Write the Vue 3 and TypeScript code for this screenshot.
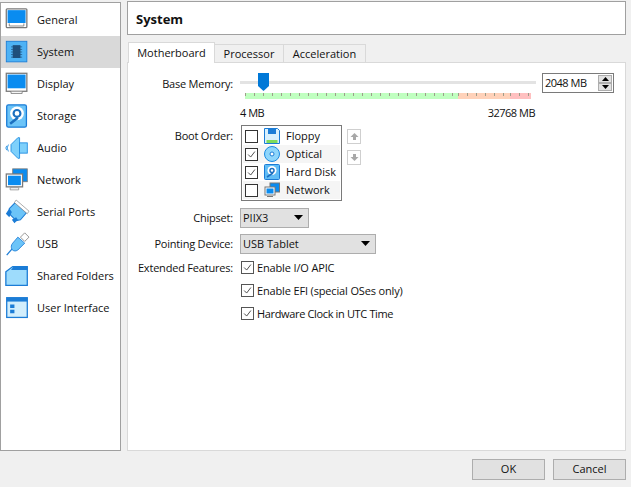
<script setup lang="ts">
interface NavItem { id: string; label: string }
const nav: NavItem[] = [
  { id: 'general', label: 'General' },
  { id: 'system', label: 'System' },
  { id: 'display', label: 'Display' },
  { id: 'storage', label: 'Storage' },
  { id: 'audio', label: 'Audio' },
  { id: 'network', label: 'Network' },
  { id: 'serial', label: 'Serial Ports' },
  { id: 'usb', label: 'USB' },
  { id: 'folders', label: 'Shared Folders' },
  { id: 'ui', label: 'User Interface' },
]
const boot = [
  { id: 'floppy', label: 'Floppy', on: false },
  { id: 'optical', label: 'Optical', on: true },
  { id: 'disk', label: 'Hard Disk', on: true },
  { id: 'net', label: 'Network', on: false },
]
const features = ['Enable I/O APIC', 'Enable EFI (special OSes only)', 'Hardware Clock in UTC Time']
</script>

<template>
  <div class="win">
    <div class="main">
      <aside class="side">
        <div v-for="n in nav" :key="n.id" class="nav" :class="{ active: n.id === 'system' }">
          <svg class="nicon" viewBox="0 0 28 28">
            <template v-if="n.id === 'general'">
              <rect x="1.500" y="1" width="24" height="22" rx="1" fill="#fff" stroke="#7a7a7a" stroke-width="1.500"/>
              <rect x="3" y="2.500" width="21" height="15" fill="#0a8cf0"/>
              <path d="M5 18v3h17v-3" fill="#fff" stroke="#7a7a7a"/>
            </template>
            <template v-else-if="n.id === 'system'">
              <rect x="1.500" y="1.500" width="24" height="24" fill="#4db2f5" stroke="#1b7cd6"/>
              <rect x="9" y="6" width="9" height="15" fill="#1f4f7d"/>
              <path d="M7 8h13M7 11h13M7 14h13M7 17h13M7 20h13" stroke="#1f4f7d" stroke-width=".8"/>
            </template>
            <template v-else-if="n.id === 'display'">
              <rect x="1.500" y="1.500" width="24" height="21" fill="#fff" stroke="#7a7a7a" stroke-width="1.500"/>
              <rect x="3" y="3" width="21" height="16" fill="#0a8cf0"/>
              <path d="M7 23v2h13v-2" fill="#fff" stroke="#7a7a7a"/>
            </template>
            <template v-else-if="n.id === 'storage'">
              <rect x="2" y="1" width="23" height="26" rx="2" fill="#6cc4f8" stroke="#1b7cd6" stroke-width="1.500"/>
              <circle cx="14" cy="11" r="8" fill="#fff"/>
              <circle cx="14" cy="11" r="4" fill="none" stroke="#1b6fc0" stroke-width="2.500"/>
              <path d="M6 23l9-7" stroke="#1b6fc0" stroke-width="3"/>
            </template>
            <template v-else-if="n.id === 'audio'">
              <path d="M7 10L15 2h2v24h-2l-8-8z" fill="#7ed0fb" stroke="#1b8ae0"/>
              <rect x="17" y="8" width="9" height="12" fill="#7ed0fb" stroke="#1b8ae0"/>
              <path d="M4 10q-3 4 0 8M2 11.500q-2 2.500 0 5" fill="none" stroke="#1b8ae0"/>
            </template>
            <template v-else-if="n.id === 'network'">
              <rect x="9" y="1" width="17" height="15" fill="#0a8cf0" stroke="#7a7a7a"/>
              <rect x="1.500" y="7" width="19" height="15" fill="#fff" stroke="#7a7a7a" stroke-width="1.500"/>
              <rect x="3.500" y="9" width="15" height="11" fill="#0a8cf0"/>
              <path d="M6 23h10v2.500H6z" fill="#fff" stroke="#7a7a7a" stroke-width=".8"/>
            </template>
            <template v-else-if="n.id === 'serial'">
              <path d="M5 10L12 3l13 12-7 8-5 1-8-8z" fill="#6cc4f8" stroke="#1b7cd6" stroke-width="1.200"/>
              <path d="M13 0l15 13-2 3L11 3z" fill="#fff" stroke="#888" stroke-width=".8"/>
              <path d="M5 10l-4 6 4 4 3-6zM13 20l-5 3 3 4 4-4z" fill="#1b7cd6"/>
            </template>
            <template v-else-if="n.id === 'usb'">
              <path d="M18 6l5-5 5 5-5 5z" fill="#fff" stroke="#888"/>
              <path d="M15 6l8 7-8 8c-3 2-6 1-7-1s-1-5 1-7z" fill="#6cc4f8" stroke="#1b7cd6"/>
              <path d="M8 20l-6 7" stroke="#1b7cd6" stroke-width="1.500"/>
            </template>
            <template v-else-if="n.id === 'folders'">
              <path d="M1 9l8-6h17v22H1z" fill="#9edcfc" stroke="#1b7cd6" stroke-width="1.500"/>
              <path d="M10 3h16v4H7z" fill="#1b7cd6"/>
            </template>
            <template v-else>
              <rect x="2" y="2" width="24" height="23" fill="#d2eefc" stroke="#1b7cd6" stroke-width="1.500"/>
              <rect x="2" y="2" width="24" height="4.500" fill="#1b7cd6"/>
              <path d="M6 10h5v4H6zM6 16h5v4H6z" fill="#1b7cd6"/>
            </template>
          </svg>
          <span class="ntext">{{ n.label }}</span>
        </div>
      </aside>

      <section class="content">
        <header class="title">System</header>
        <div class="tabs">
          <div class="tab on">Motherboard</div>
          <div class="tab t2">Processor</div>
          <div class="tab t3">Acceleration</div>
        </div>
        <div class="panel">
          <div class="row mem">
            <label class="lab">Base Memory:</label>
            <div class="slider">
              <div class="track"><svg class="thumb" viewBox="0 0 11 18"><path d="M0 0h11v13l-5.500 5L0 13z" fill="#0078d7"/></svg></div>
              <div class="scale"><i class="g"></i><i class="o"></i><i class="r"></i></div>
              <div class="ends"><span>4 MB</span><span>32768 MB</span></div>
            </div>
            <div class="spin">
              <span>2048 MB</span>
              <div class="arrows">
                <b><svg viewBox="0 0 7 4"><path d="M3.500 0L7 4H0z"/></svg></b>
                <b><svg viewBox="0 0 7 4"><path d="M0 0h7L3.500 4z"/></svg></b>
              </div>
            </div>
          </div>

          <div class="row bootrow">
            <label class="lab">Boot Order:</label>
            <div class="list">
              <div v-for="b in boot" :key="b.id" class="item">
                <span class="cb">
                  <svg v-if="b.on" viewBox="0 0 13 13"><path d="M2.500 6.500l3 3 5-6.500" fill="none" stroke="#444" stroke-width="1.100"/></svg>
                </span>
                <svg class="bicon" viewBox="0 0 16 16">
                  <template v-if="b.id === 'floppy'">
                    <path d="M.5.5h13l2 2v13H.5z" fill="#d8f0fd" stroke="#1b7cd6"/>
                    <rect x="4" y="1" width="8" height="5" fill="#1b7cd6"/>
                    <rect x="2.500" y="12" width="11" height="3" fill="#7ddc5a"/>
                  </template>
                  <template v-else-if="b.id === 'optical'">
                    <circle cx="8" cy="8" r="7.500" fill="#8fd6fb" stroke="#1b8ae0"/>
                    <circle cx="8" cy="8" r="2" fill="#fff" stroke="#1b7cd6"/>
                  </template>
                  <template v-else-if="b.id === 'disk'">
                    <rect x=".5" y=".5" width="15" height="15" rx="1" fill="#5fbcf5" stroke="#1b7cd6"/>
                    <circle cx="8" cy="6.500" r="4.500" fill="#fff"/>
                    <circle cx="8" cy="6.500" r="2" fill="none" stroke="#1b6fc0" stroke-width="1.500"/>
                    <path d="M3 13l6-4" stroke="#1b6fc0" stroke-width="1.600"/>
                  </template>
                  <template v-else>
                    <rect x="6" y="1" width="9.500" height="9" fill="#0a8cf0" stroke="#777"/>
                    <rect x="1" y="5" width="10" height="8" fill="#fff" stroke="#777"/>
                    <rect x="2.500" y="6.500" width="7" height="5" fill="#0a8cf0"/>
                    <path d="M3 14.500h6" stroke="#777"/>
                  </template>
                </svg>
                <span class="blabel">{{ b.label }}</span>
              </div>
            </div>
            <div class="moves">
              <span class="mv"><svg viewBox="0 0 9 9"><path d="M4.500 1L8.500 5H6v3H3V5H.5z" fill="#a8a8a8"/></svg></span>
              <span class="mv"><svg viewBox="0 0 9 9"><path d="M3 1h3v3h2.500L4.500 8 .5 4H3z" fill="#a8a8a8"/></svg></span>
            </div>
          </div>

          <div class="row chip">
            <label class="lab">Chipset:</label>
            <div class="combo s1"><span>PIIX3</span><svg viewBox="0 0 9 5"><path d="M0 0h9L4.500 5z"/></svg></div>
          </div>
          <div class="row point">
            <label class="lab">Pointing Device:</label>
            <div class="combo s2"><span>USB Tablet</span><svg viewBox="0 0 9 5"><path d="M0 0h9L4.500 5z"/></svg></div>
          </div>
          <div v-for="(f, i) in features" :key="f" class="row feat">
            <label class="lab">{{ i === 0 ? 'Extended Features:' : '' }}</label>
            <span class="cb"><svg viewBox="0 0 13 13"><path d="M2.500 6.500l3 3 5-6.500" fill="none" stroke="#444" stroke-width="1.100"/></svg></span>
            <span class="ftext" :class="{ tight: i === 2 }">{{ f }}</span>
          </div>
        </div>
      </section>
    </div>
    <footer class="foot">
      <button class="btn">OK</button>
      <button class="btn">Cancel</button>
    </footer>
  </div>
</template>

<style>
html, body { margin: 0; background: #f0f0f0; }
</style>

<style scoped>
.win {
  width: 631px; height: 487px; overflow: hidden; box-sizing: border-box;
  background: #f0f0f0; display: flex; flex-direction: column;
  font: 11px "Open Sans", "Noto Sans", sans-serif; color: #111;
}
.main { display: flex; height: 451px; }
.side {
  box-sizing: border-box; width: 121px; height: 449px; margin-top: 2px;
  background: #fff; border: 1px solid #a0a0a0; padding-top: 1px;
}
.nav { height: 32px; display: flex; align-items: center; box-sizing: border-box; padding-left: 4px; }
.nav.active { background: #d9d9d9; }
.nicon { width: 24px; height: 24px; margin-right: 8px; flex: none; overflow: visible; }
.ntext { padding-bottom: 2px; }
.content { margin-left: 6px; width: 499px; display: flex; flex-direction: column; margin-top: 1px; }
.title {
  box-sizing: border-box; height: 34px; background: #fff; border: 1px solid #a0a0a0;
  padding-left: 8px; line-height: 35px; font-size: 13px; font-weight: 700;
}
.tabs { display: flex; align-items: flex-end; height: 28px; padding-left: 1px; position: relative; z-index: 1; margin-bottom: -1px; }
.tab { box-sizing: border-box; height: 19px; border: 1px solid #d9d9d9; border-left: 0; line-height: 17px; text-align: center; background: #f0f0f0; }
.tab.on { width: 87px; height: 21px; background: #fff; border-left: 1px solid #d9d9d9; border-bottom: 0; line-height: 20px; }
.t2 { width: 69px; }
.t3 { width: 82px; }
.panel { box-sizing: border-box; height: 389px; background: #fff; border: 1px solid #d9d9d9; padding-top: 10px; }
.row { display: flex; }
.lab { width: 105px; flex: none; text-align: right; margin-right: 7px; letter-spacing: -0.2px; }
.mem { height: 52px; }
.mem .lab { line-height: 22px; }
.slider { width: 296px; flex: none; }
.track { height: 3px; background: #e3e3e3; margin-top: 8px; position: relative; }
.thumb { position: absolute; left: 18px; top: -8px; width: 11px; height: 18px; }
.scale { display: flex; height: 6px; margin: 9px 5px 0; }
.scale i { display: block; height: 6px; background-image: repeating-linear-gradient(90deg, #9d9d8a 0 1px, transparent 1px 9px); background-size: 100% 3px; background-repeat: no-repeat; }
.g { width: 213px; background-color: #c0ffc0; }
.o { width: 52px; background-color: #ffd2ba; }
.r { width: 21px; background-color: #ffc0c0; }
.ends { display: flex; justify-content: space-between; margin: 6px 1px 0 0; line-height: 16px; letter-spacing: -0.5px; }
.spin {
  box-sizing: border-box; width: 72px; height: 20px; margin-left: 6px; border: 1px solid #7a7a7a;
  display: flex; justify-content: space-between; padding-left: 2px; line-height: 18px; background: #fff; letter-spacing: -0.5px;
}
.arrows { display: flex; flex-direction: column; width: 14px; margin: 1px 1px 1px 0; gap: 0; }
.arrows b { flex: 1; background: #e1e1e1; border: 1px solid #adadad; display: flex; align-items: center; justify-content: center; box-sizing: border-box; }
.arrows svg { width: 7px; height: 4px; }
.bootrow { height: 83px; }
.bootrow .lab { line-height: 22px; }
.list { box-sizing: border-box; width: 101px; height: 76px; border: 1px solid #7a7a7a; padding: 1px; margin-left: 1px; background: #fff; }
.item { height: 18px; display: flex; align-items: center; padding-left: 2px; }
.item:nth-child(even) { background: #f5f5f5; }
.blabel { white-space: nowrap; padding-bottom: 1px; }
.cb { box-sizing: border-box; width: 13px; height: 13px; border: 1px solid #333; background: #fff; flex: none; display: block; }
.cb svg { display: block; width: 11px; height: 11px; }
.bicon { width: 16px; height: 16px; margin: 0 6px 0 6px; flex: none; }
.moves { display: flex; flex-direction: column; gap: 6px; margin: 4px 0 0 5px; }
.mv { box-sizing: border-box; width: 14px; height: 15px; border: 1px solid #cfcfcf; display: flex; align-items: center; justify-content: center; }
.mv svg { width: 9px; height: 9px; }
.chip { height: 26px; }
.chip .lab, .point .lab { line-height: 19px; }
.point { height: 26px; }
.combo {
  box-sizing: border-box; height: 20px; background: #e1e1e1; border: 1px solid #adadad;
  display: flex; align-items: center; justify-content: space-between; padding: 0 5px 1px 2px;
}
.combo svg { width: 9px; height: 5px; }
.s1 { width: 69px; }
.s2 { width: 136px; }
.feat { height: 23px; align-items: flex-start; }
.feat .lab { line-height: 16px; margin-right: 8px; }
.feat .cb { margin-top: 1px; border-color: #555; }
.ftext { margin-left: 3px; line-height: 16px; letter-spacing: -0.15px; }
.tight { letter-spacing: -0.35px; }
.foot { display: flex; justify-content: flex-end; gap: 8px; padding: 8px 5px 0 0; }
.btn {
  box-sizing: border-box; width: 73px; height: 21px; background: #e1e1e1; border: 1px solid #adadad;
  font: inherit; color: #111; padding: 0 0 2px;
}
</style>
